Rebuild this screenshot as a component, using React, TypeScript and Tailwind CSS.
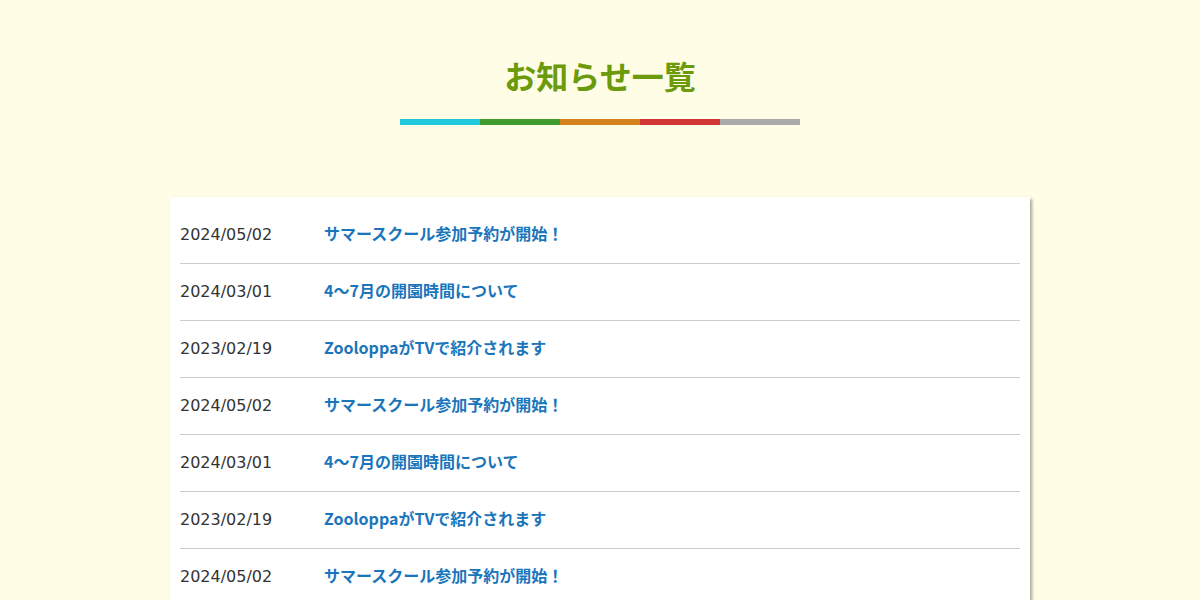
const news = [
  { date: "2024/05/02", title: "サマースクール参加予約が開始！" },
  { date: "2024/03/01", title: "4〜7月の開園時間について" },
  { date: "2023/02/19", title: "ZooloppaがTVで紹介されます" },
  { date: "2024/05/02", title: "サマースクール参加予約が開始！" },
  { date: "2024/03/01", title: "4〜7月の開園時間について" },
  { date: "2023/02/19", title: "ZooloppaがTVで紹介されます" },
  { date: "2024/05/02", title: "サマースクール参加予約が開始！" },
  { date: "2024/03/01", title: "4〜7月の開園時間について" },
];

export default function App() {
  return (
    <div
      className="min-h-screen bg-[#fffde6] pt-[54px] pb-16"
      style={{ fontFamily: '"DejaVu Sans", "Noto Sans CJK JP", sans-serif' }}
    >
      <h1 className="text-center text-[32px] leading-[48px] font-bold text-[#6b9a0a]">
        お知らせ一覧
      </h1>
      <div className="mx-auto mt-[17px] flex h-[6px] w-[400px]">
        <span className="flex-1 bg-[#22c8dd]" />
        <span className="flex-1 bg-[#409b2e]" />
        <span className="flex-1 bg-[#d4821e]" />
        <span className="flex-1 bg-[#d23535]" />
        <span className="flex-1 bg-[#aaaaaa]" />
      </div>

      <ul className="mx-auto mt-[72px] w-[860px] bg-white p-[10px] shadow-[2px_2px_3px_rgba(0,0,0,0.35)]">
        {news.map((n, i) => (
          <li
            key={i}
            className="flex h-[57px] items-center border-b border-[#cccccc] text-base"
          >
            <span className="w-[144px] text-[#333333]">{n.date}</span>
            <a
              href="#"
              className="font-['Noto_Sans_CJK_JP',sans-serif] font-bold text-[#1a75bb] -translate-y-[2px]"
            >
              {n.title}
            </a>
          </li>
        ))}
      </ul>
    </div>
  );
}
